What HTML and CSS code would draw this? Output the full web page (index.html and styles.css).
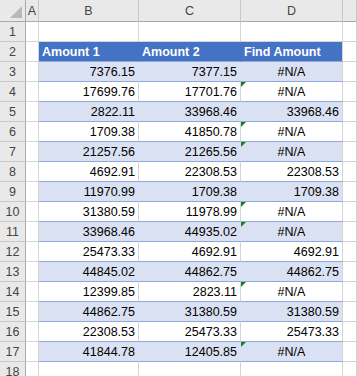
FILE: index.html
```html
<!DOCTYPE html>
<html>
<head>
<meta charset="utf-8">
<link rel="stylesheet" href="styles.css">
</head>
<body>
<div class="sheet">
  <div class="hd corner"><svg class="corner-tri" width="12" height="12" viewBox="0 0 12 12"><polygon points="12,0 12,12 0,12" fill="#b8b8b8"/></svg></div>
  <div class="hd col">A</div>
  <div class="hd col">B</div>
  <div class="hd col">C</div>
  <div class="hd col">D</div>
  <div class="hd col last"></div>

  <div class="hd row">1</div><div class="c"></div><div class="c"></div><div class="c"></div><div class="c"></div><div class="c"></div>

  <div class="hd row">2</div><div class="c"></div><div class="c th">Amount 1</div><div class="c th">Amount 2</div><div class="c th end">Find Amount</div><div class="c"></div>

  <div class="hd row">3</div><div class="c"></div><div class="c tb band">7376.15</div><div class="c tb band">7377.15</div><div class="c tb band end na">#N/A</div><div class="c"></div>
  <div class="hd row">4</div><div class="c"></div><div class="c tb">17699.76</div><div class="c tb">17701.76</div><div class="c tb end na"><span class="tri"></span>#N/A</div><div class="c"></div>
  <div class="hd row">5</div><div class="c"></div><div class="c tb band">2822.11</div><div class="c tb band">33968.46</div><div class="c tb band end">33968.46</div><div class="c"></div>
  <div class="hd row">6</div><div class="c"></div><div class="c tb">1709.38</div><div class="c tb">41850.78</div><div class="c tb end na"><span class="tri"></span>#N/A</div><div class="c"></div>
  <div class="hd row">7</div><div class="c"></div><div class="c tb band">21257.56</div><div class="c tb band">21265.56</div><div class="c tb band end na"><span class="tri"></span>#N/A</div><div class="c"></div>
  <div class="hd row">8</div><div class="c"></div><div class="c tb">4692.91</div><div class="c tb">22308.53</div><div class="c tb end">22308.53</div><div class="c"></div>
  <div class="hd row">9</div><div class="c"></div><div class="c tb band">11970.99</div><div class="c tb band">1709.38</div><div class="c tb band end">1709.38</div><div class="c"></div>
  <div class="hd row">10</div><div class="c"></div><div class="c tb">31380.59</div><div class="c tb">11978.99</div><div class="c tb end na"><span class="tri"></span>#N/A</div><div class="c"></div>
  <div class="hd row">11</div><div class="c"></div><div class="c tb band">33968.46</div><div class="c tb band">44935.02</div><div class="c tb band end na"><span class="tri"></span>#N/A</div><div class="c"></div>
  <div class="hd row">12</div><div class="c"></div><div class="c tb">25473.33</div><div class="c tb">4692.91</div><div class="c tb end">4692.91</div><div class="c"></div>
  <div class="hd row">13</div><div class="c"></div><div class="c tb band">44845.02</div><div class="c tb band">44862.75</div><div class="c tb band end">44862.75</div><div class="c"></div>
  <div class="hd row">14</div><div class="c"></div><div class="c tb">12399.85</div><div class="c tb">2823.11</div><div class="c tb end na"><span class="tri"></span>#N/A</div><div class="c"></div>
  <div class="hd row">15</div><div class="c"></div><div class="c tb band">44862.75</div><div class="c tb band">31380.59</div><div class="c tb band end">31380.59</div><div class="c"></div>
  <div class="hd row">16</div><div class="c"></div><div class="c tb">22308.53</div><div class="c tb">25473.33</div><div class="c tb end">25473.33</div><div class="c"></div>
  <div class="hd row">17</div><div class="c"></div><div class="c tb band">41844.78</div><div class="c tb band">12405.85</div><div class="c tb band end na"><span class="tri"></span>#N/A</div><div class="c"></div>
  <div class="hd row">18</div><div class="c"></div><div class="c"></div><div class="c"></div><div class="c"></div><div class="c"></div>
</div>
</body>
</html>
```
FILE: styles.css
```css
html, body {
  margin: 0;
  padding: 0;
  background: #ffffff;
  overflow: hidden;
}
.sheet {
  display: grid;
  grid-template-columns: 26px 13px 100px 102px 102px 1fr;
  grid-template-rows: 22px repeat(18, 20px);
  width: 357px;
  font-family: "Liberation Sans", Arial, sans-serif;
  font-size: 12.5px;
  color: #000;
}
.sheet > div {
  box-sizing: border-box;
  border-right: 1px solid #d4d4d4;
  border-bottom: 1px solid #d4d4d4;
  white-space: nowrap;
  overflow: hidden;
}
.hd {
  background: #e9e9e9;
  color: #444;
  display: flex;
  align-items: center;
  justify-content: center;
  border-color: #c8c8c8 !important;
}
.hd.col {
  border-bottom-color: #a9a9a9 !important;
}
.hd.row {
  border-right-color: #a9a9a9 !important;
  padding-top: 1px;
}
.corner {
  position: relative;
  border-bottom-color: #a9a9a9 !important;
  border-right-color: #a9a9a9 !important;
}
.corner-tri {
  position: absolute;
  right: 3px;
  bottom: 3px;
}
.c {
  display: flex;
  align-items: center;
  padding: 1px 3px 0;
}
.th {
  background: #4472c4;
  color: #fff;
  font-weight: bold;
  border-right-color: #4472c4 !important;
  border-bottom-color: #8ea9db !important;
}
.th.end {
  border-right-color: #d4d4d4 !important;
}
.tb {
  justify-content: flex-end;
  border-bottom-color: #8ea9db !important;
  position: relative;
}
.band {
  background: #d9e1f2;
  border-right-color: #d9e1f2 !important;
}
.band.end {
  border-right-color: #d4d4d4 !important;
}
.na {
  justify-content: center;
}
.tri {
  position: absolute;
  left: 0;
  top: 0;
  width: 0;
  height: 0;
  border-top: 5px solid #1e7b1e;
  border-right: 5px solid transparent;
}
```
